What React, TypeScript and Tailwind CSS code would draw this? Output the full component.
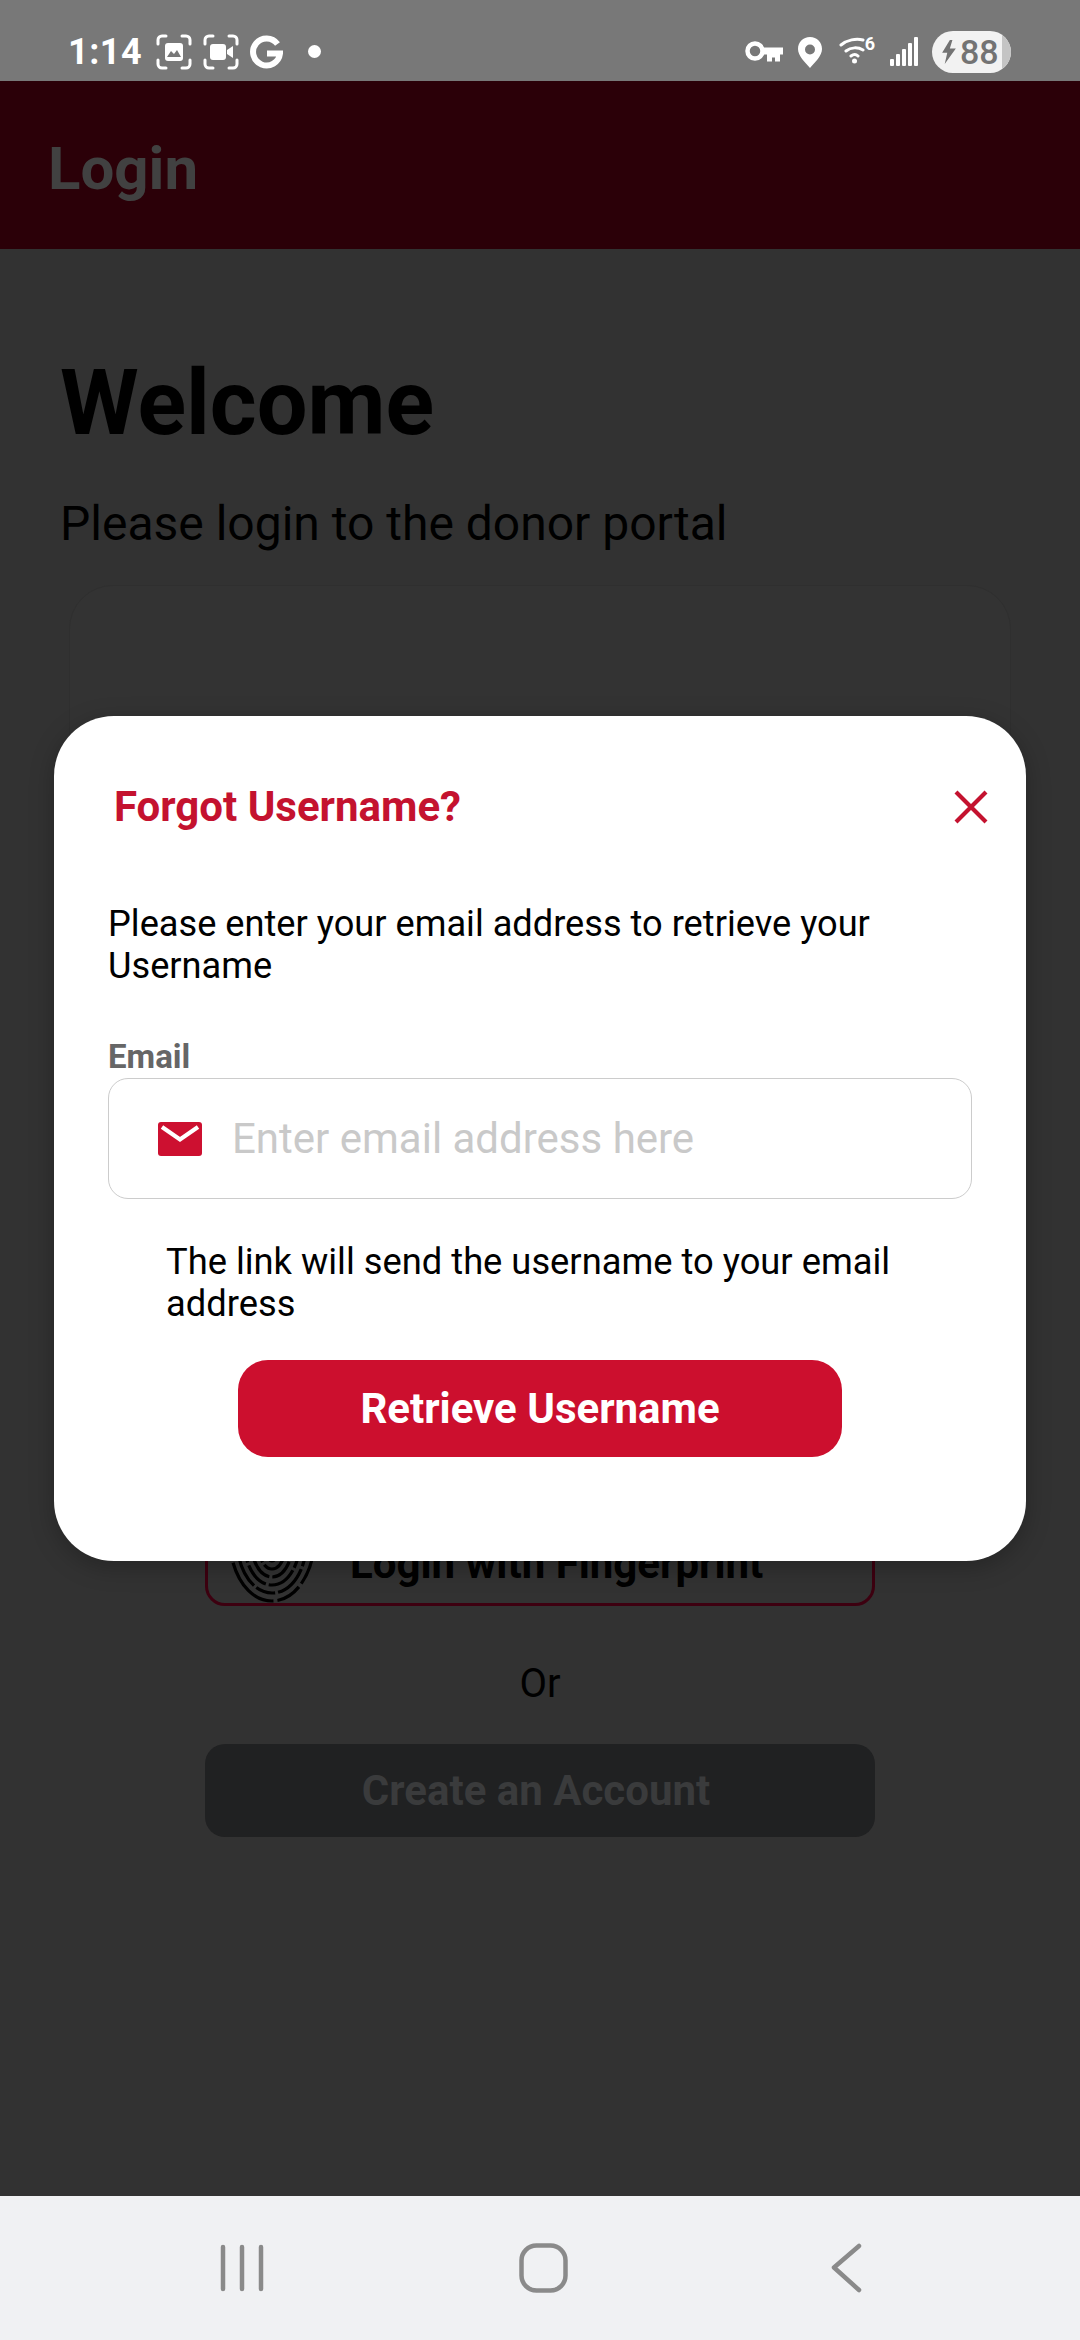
const roboto = "font-['Roboto',sans-serif]";

function CaptureFrame({ children }: { children: React.ReactNode }) {
  return (
    <svg width="36" height="36" viewBox="0 0 36 36" fill="none">
      <path d="M2 10V6a4 4 0 0 1 4-4h4M26 2h4a4 4 0 0 1 4 4v4M34 26v4a4 4 0 0 1-4 4h-4M10 34H6a4 4 0 0 1-4-4v-4" stroke="white" strokeWidth="3" strokeLinecap="round" />
      {children}
    </svg>
  );
}

function StatusBar() {
  return (
    <div className="flex h-[81px] items-center justify-between bg-[#787878] pl-[68px] pr-[69px] pt-[22px]">
      <div className="flex items-center">
        <span className={`${roboto} w-[88px] text-[36px] font-bold leading-none tracking-[0.5px] text-white`}>1:14</span>
        <CaptureFrame>
          <rect x="9" y="9" width="18" height="18" rx="3" fill="white" />
          <path d="M11 23l4-6 3 3 3-4 4 7z" fill="#787878" />
        </CaptureFrame>
        <div className="ml-[11px]">
          <CaptureFrame>
            <rect x="7" y="10" width="16" height="16" rx="3" fill="white" />
            <path d="M24 16l6-4v12l-6-4z" fill="white" />
          </CaptureFrame>
        </div>
        <svg width="34" height="34" viewBox="0 0 34 34" fill="none" className="ml-[10px]">
          <path d="M28.500 9A13.500 13.500 0 1 0 31 18.500H18" stroke="white" strokeWidth="6" />
        </svg>
        <div className="ml-[25px] h-[13px] w-[13px] rounded-full bg-white" />
      </div>
      <div className="flex items-center">
        <svg width="38" height="22" viewBox="0 0 38 22" fill="none">
          <circle cx="10" cy="10" r="7.500" stroke="white" strokeWidth="4.500" />
          <path d="M16 6.500h22v7h-3v7h-5v-4h-3v4h-5v-7h-6z" fill="white" />
        </svg>
        <svg width="26" height="32" viewBox="0 0 26 32" className="ml-[14px]">
          <path fillRule="evenodd" d="M13 1C6 1 1 6 1 13c0 7 7 13 12 19 5-6 12-12 12-19C25 6 20 1 13 1zm0 7.500a5 5 0 1 1 0 10 5 5 0 0 1 0-10z" fill="white" />
        </svg>
        <svg width="36" height="28" viewBox="0 0 36 28" fill="none" className="ml-[16px] -mt-[4px]">
          <path d="M2 9c6-5 15-7 22-5M7 15c5-4 12-4 17-1M12 20c2.500-2 5-2 7 0" stroke="white" strokeWidth="3" strokeLinecap="round" />
          <circle cx="15.500" cy="25" r="2.500" fill="white" />
        </svg>
        <span className={`${roboto} -ml-[10px] -mt-[16px] text-[18px] font-bold leading-none text-white`}>6</span>
        <svg width="28" height="30" viewBox="0 0 28 30" className="ml-[15px]">
          <rect x="0" y="22" width="4" height="7" rx="1" fill="white" />
          <rect x="6" y="17" width="4" height="12" rx="1" fill="white" />
          <rect x="12" y="12" width="4" height="17" rx="1" fill="white" />
          <rect x="18" y="6" width="4" height="23" rx="1" fill="white" />
          <rect x="24" y="0" width="4" height="29" rx="1" fill="white" />
        </svg>
        <div className="relative ml-[14px] flex h-[42px] w-[79px] items-center overflow-hidden rounded-full bg-[#f2f2f2]">
          <div className="absolute right-0 top-0 h-full w-[9px] bg-[#c4c4c4]" />
          <svg width="14" height="24" viewBox="0 0 16 28" className="relative ml-[10px]">
            <path d="M9 0 0 15h6l-3 13L16 10H9l3-10z" fill="#737373" />
          </svg>
          <span className={`${roboto} relative ml-[4px] text-[34px] font-medium leading-none text-[#737373]`}>88</span>
        </div>
      </div>
    </div>
  );
}

function Fingerprint() {
  return (
    <svg width="88" height="100" viewBox="0 0 88 100" fill="none" className="shrink-0">
      <g stroke="black" strokeWidth="3.200">
        <path d="M1 30c0 38 18 68 43 68s43-30 43-68" strokeDasharray="26 4 60 4" />
        <path d="M8 30c0 34 15 60 36 60s36-26 36-60" strokeDasharray="20 3 34 3" />
        <path d="M15 30c0 30 12 52 29 52s29-22 29-52" strokeDasharray="30 3 26 3" />
        <path d="M22 30c0 26 9 44 22 44s22-18 22-44" strokeDasharray="24 3" />
        <path d="M29 30c0 22 6 36 15 36s15-14 15-36" strokeDasharray="30 3" />
        <path d="M36 30c0 16 3 28 8 28s8-12 8-28" />
      </g>
    </svg>
  );
}

function Backdrop() {
  return (
    <div className="flex flex-1 flex-col bg-[#323232]">
      <div className="flex h-[168px] items-center bg-[#2b0008] pl-[48px] pt-[7px]">
        <span className={`${roboto} text-[60px] font-bold leading-none text-[#414141]`}>Login</span>
      </div>
      <div className={`${roboto} flex flex-1 flex-col`}>
        <h1 className="ml-[60px] mt-[102px] text-[90px] font-bold leading-[106px] text-black">Welcome</h1>
        <p className="ml-[60px] mt-[39px] text-[48px] leading-[56px] text-black">Please login to the donor portal</p>
        <div className="mx-[69px] mt-[33px] h-[915px] shrink-0 rounded-t-[44px] border border-[#2f2f2f] bg-[#333333]" />
        <div className="ml-[205px] flex h-[106px] w-[670px] shrink-0 items-end rounded-[20px] border-[3px] border-[#3d0010] pl-[20px]">
          <Fingerprint />
          <span className="mb-[18px] ml-[34px] text-[42px] font-bold leading-none text-black">Login with Fingerprint</span>
        </div>
        <p className="mt-[54px] text-center text-[40px] leading-[47px] text-black">Or</p>
        <div className="ml-[205px] mt-[37px] flex h-[93px] w-[670px] items-center justify-center rounded-[20px] bg-[#202122] pr-[8px] text-[42px] font-bold text-[#3a3b3c]">
          Create an Account
        </div>
      </div>
    </div>
  );
}

function Modal() {
  return (
    <div className={`${roboto} absolute left-[54px] top-[716px] h-[845px] w-[972px] rounded-[60px] bg-white shadow-[0_6px_24px_rgba(0,0,0,0.25)]`}>
      <div className="flex items-center justify-between pl-[60px] pr-[38px] pt-[66px]">
        <h2 className="text-[42px] font-bold leading-[49px] text-[#c4122f]">Forgot Username?</h2>
        <svg width="34" height="34" viewBox="0 0 34 34" fill="none">
          <path d="M2 2l30 30M32 2L2 32" stroke="#c4122f" strokeWidth="4.200" />
        </svg>
      </div>
      <p className="ml-[54px] mt-[72px] w-[810px] text-[36.200px] leading-[42px] text-black">
        Please enter your email address to retrieve your Username
      </p>
      <p className="ml-[54px] mt-[51px] text-[33px] font-bold leading-[38px] text-[#666666]">Email</p>
      <div className="ml-[54px] mt-[2px] flex h-[121px] w-[864px] items-center rounded-[20px] border-[1.500px] border-[#cccccc]">
        <svg width="44" height="34" viewBox="0 0 44 34" className="ml-[49px]">
          <rect width="44" height="34" rx="3" fill="#cd1030" />
          <path d="M4 5l18 12.500L40 5" stroke="white" strokeWidth="4.200" fill="none" />
        </svg>
        <span className="ml-[30px] text-[42px] leading-none text-[#c9c9c9]">Enter email address here</span>
      </div>
      <p className="ml-[112px] mt-[42px] w-[760px] text-[36.300px] leading-[42px] text-black">
        The link will send the username to your email address
      </p>
      <button className="ml-[184px] mt-[35px] flex h-[97px] w-[604px] items-center justify-center rounded-[30px] bg-[#cc0f2e] text-[42px] font-bold text-white">
        Retrieve Username
      </button>
    </div>
  );
}

function NavBar() {
  return (
    <div className="flex h-[144px] shrink-0 items-center bg-[#f0f1f3]">
      <svg width="48" height="48" viewBox="0 0 48 48" fill="none" className="ml-[219px]">
        <path d="M4 3v42M23 3v42M42 3v42" stroke="#8a8a8a" strokeWidth="4.500" strokeLinecap="round" />
      </svg>
      <svg width="50" height="50" viewBox="0 0 50 50" fill="none" className="ml-[252px]">
        <rect x="2.500" y="2.500" width="44" height="45" rx="15" stroke="#8a8a8a" strokeWidth="4.500" />
      </svg>
      <svg width="34" height="50" viewBox="0 0 34 50" fill="none" className="ml-[261px]">
        <path d="M29 3L4 24.500 29 47" stroke="#8a8a8a" strokeWidth="4.500" strokeLinecap="round" strokeLinejoin="round" />
      </svg>
    </div>
  );
}

export default function App() {
  return (
    <div className="relative flex h-[2340px] w-[1080px] flex-col overflow-hidden bg-[#323232]">
      <StatusBar />
      <Backdrop />
      <NavBar />
      <Modal />
    </div>
  );
}
